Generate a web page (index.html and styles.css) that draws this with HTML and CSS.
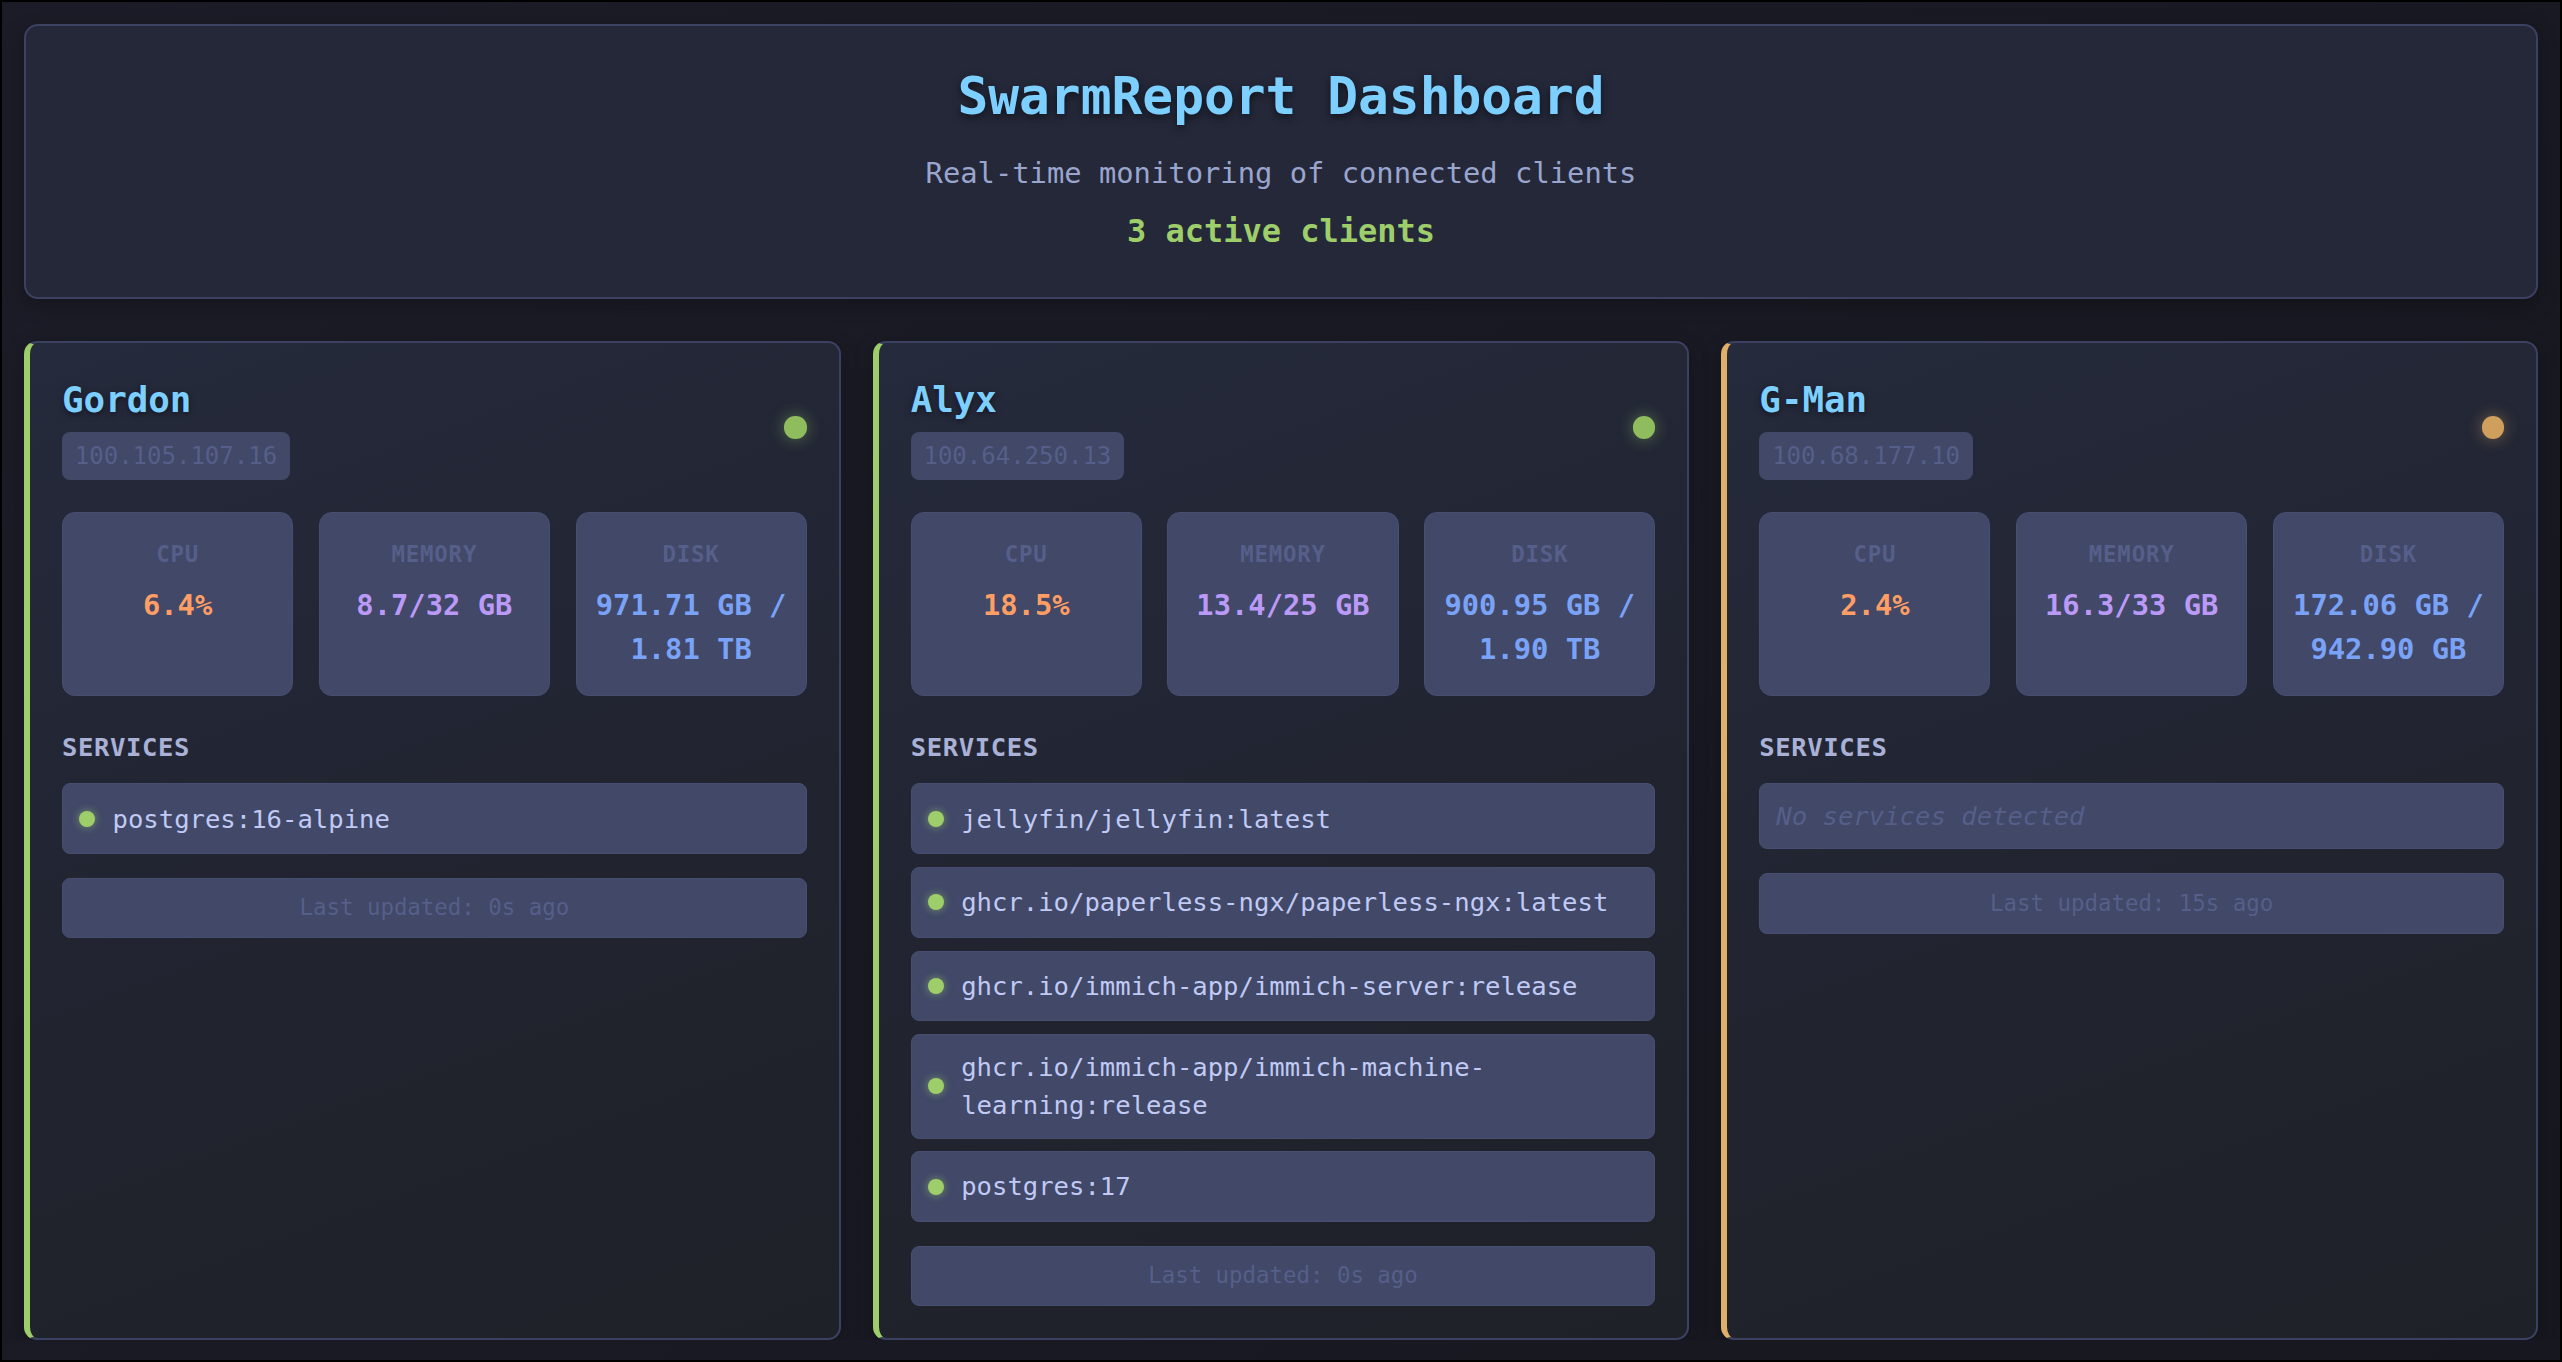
FILE: index.html
```html
<!DOCTYPE html>
<html lang="en">
<head>
<meta charset="utf-8">
<title>SwarmReport Dashboard</title>
<link rel="stylesheet" href="styles.css">
</head>
<body>
<header class="hero">
  <h1 class="hero-title">SwarmReport Dashboard</h1>
  <p class="hero-sub">Real-time monitoring of connected clients</p>
  <p class="hero-count">3 active clients</p>
</header>

<main class="clients">
  <section class="card card-online">
    <div class="card-head">
      <div class="card-id">
        <h2 class="card-name">Gordon</h2>
        <span class="card-ip">100.105.107.16</span>
      </div>
      <span class="status status-online"></span>
    </div>
    <div class="metrics">
      <div class="metric"><div class="metric-label">CPU</div><div class="metric-value v-cpu">6.4%</div></div>
      <div class="metric"><div class="metric-label">MEMORY</div><div class="metric-value v-mem">8.7/32 GB</div></div>
      <div class="metric"><div class="metric-label">DISK</div><div class="metric-value v-disk">971.71 GB / 1.81 TB</div></div>
    </div>
    <div class="services-label">SERVICES</div>
    <ul class="services">
      <li class="service"><span class="svc-dot"></span><span class="svc-name">postgres:16-alpine</span></li>
    </ul>
    <div class="updated">Last updated: 0s ago</div>
  </section>

  <section class="card card-online">
    <div class="card-head">
      <div class="card-id">
        <h2 class="card-name">Alyx</h2>
        <span class="card-ip">100.64.250.13</span>
      </div>
      <span class="status status-online"></span>
    </div>
    <div class="metrics">
      <div class="metric"><div class="metric-label">CPU</div><div class="metric-value v-cpu">18.5%</div></div>
      <div class="metric"><div class="metric-label">MEMORY</div><div class="metric-value v-mem">13.4/25 GB</div></div>
      <div class="metric"><div class="metric-label">DISK</div><div class="metric-value v-disk">900.95 GB / 1.90 TB</div></div>
    </div>
    <div class="services-label">SERVICES</div>
    <ul class="services">
      <li class="service"><span class="svc-dot"></span><span class="svc-name">jellyfin/jellyfin:latest</span></li>
      <li class="service"><span class="svc-dot"></span><span class="svc-name">ghcr.io/paperless-ngx/paperless-ngx:latest</span></li>
      <li class="service"><span class="svc-dot"></span><span class="svc-name">ghcr.io/immich-app/immich-server:release</span></li>
      <li class="service"><span class="svc-dot"></span><span class="svc-name">ghcr.io/immich-app/immich-machine-learning:release</span></li>
      <li class="service"><span class="svc-dot"></span><span class="svc-name">postgres:17</span></li>
    </ul>
    <div class="updated">Last updated: 0s ago</div>
  </section>

  <section class="card card-idle">
    <div class="card-head">
      <div class="card-id">
        <h2 class="card-name">G-Man</h2>
        <span class="card-ip">100.68.177.10</span>
      </div>
      <span class="status status-idle"></span>
    </div>
    <div class="metrics">
      <div class="metric"><div class="metric-label">CPU</div><div class="metric-value v-cpu">2.4%</div></div>
      <div class="metric"><div class="metric-label">MEMORY</div><div class="metric-value v-mem">16.3/33 GB</div></div>
      <div class="metric"><div class="metric-label">DISK</div><div class="metric-value v-disk">172.06 GB / 942.90 GB</div></div>
    </div>
    <div class="services-label">SERVICES</div>
    <div class="no-services">No services detected</div>
    <div class="updated">Last updated: 15s ago</div>
  </section>
</main>
</body>
</html>
```

FILE: styles.css
```css
* { box-sizing: border-box; }

html {
  background: linear-gradient(135deg, #1b1c27 0%, #17171f 100%);
  min-height: 100%;
}

body {
  margin: 0;
  padding: 24px 24px 0;
  font-family: "DejaVu Sans Mono", "Liberation Mono", monospace;
  color: #c0caf5;
}

body::after {
  content: "";
  position: fixed;
  inset: 0;
  border: 2px solid #000;
  pointer-events: none;
}

.hero {
  background: #242839;
  border: 2px solid #3b4261;
  border-radius: 14px;
  padding: 40px 40px 41.5px;
  text-align: center;
  margin-bottom: 42px;
  box-shadow: 0 6px 20px rgba(0, 0, 0, 0.25);
}

.hero-title {
  margin: 0 0 25.6px;
  font-size: 51.2px;
  font-weight: bold;
  line-height: normal;
  color: #7dcfff;
  text-shadow: 0 3px 8px rgba(0, 0, 0, 0.55);
}

.hero-sub {
  margin: 0;
  font-size: 28.8px;
  line-height: 43.2px;
  color: #9aa5ce;
}

.hero-count {
  margin: 12.5px 0 0;
  font-size: 32px;
  line-height: 48px;
  font-weight: bold;
  color: #9ece6a;
}

.clients {
  display: grid;
  grid-template-columns: repeat(3, 1fr);
  gap: 32px;
}

.card {
  background: linear-gradient(160deg, #252a3c 0%, #21232f 55%, #1f2128 100%);
  border: 2px solid #3b4261;
  border-left-width: 6px;
  border-radius: 13px;
  padding: 32px;
  box-shadow: 0 6px 20px rgba(0, 0, 0, 0.25);
}

.card-online { border-left-color: #9ece6a; }
.card-idle { border-left-color: #e0af68; }

.card-head {
  display: flex;
  justify-content: space-between;
  align-items: center;
  margin-bottom: 32px;
}

.card-id {
  display: flex;
  flex-direction: column;
  align-items: flex-start;
}

.card-name {
  margin: 0 0 7.6px;
  font-size: 35.84px;
  line-height: 50px;
  font-weight: bold;
  color: #7dcfff;
  text-shadow: 0 2px 6px rgba(0, 0, 0, 0.5);
}

.card-ip {
  display: inline-block;
  background: #414868;
  color: #565f89;
  font-size: 24px;
  line-height: 28px;
  padding: 10px 12.8px;
  border-radius: 8px;
}

.status {
  width: 22.4px;
  height: 22.4px;
  border-radius: 50%;
  flex: none;
}

.status-online {
  background: #8fbd5e;
  box-shadow: 0 0 16px rgba(158, 206, 106, 0.45);
}

.status-idle {
  background: #cf9f5e;
  box-shadow: 0 0 16px rgba(224, 175, 104, 0.45);
}

.metrics {
  display: grid;
  grid-template-columns: repeat(3, 1fr);
  gap: 25.6px;
  margin-bottom: 32px;
}

.metric {
  background: #414868;
  border: 1px solid #474e70;
  border-radius: 12.8px;
  padding: 24.6px 8px;
  text-align: center;
}

.metric-label {
  font-size: 22.4px;
  line-height: 33.6px;
  font-weight: bold;
  color: #565f89;
  letter-spacing: 0.8px;
  margin-bottom: 12.8px;
}

.metric-value {
  font-size: 28.8px;
  line-height: 43.2px;
  font-weight: bold;
}

.v-cpu { color: #ff9e64; }
.v-mem { color: #bb9af7; }
.v-disk { color: #7aa2f7; }

.services-label {
  padding-top: 3px;
  font-size: 25.6px;
  line-height: 33.3px;
  font-weight: bold;
  color: #a9b1d6;
  letter-spacing: 0.6px;
  margin-bottom: 18.7px;
}

.services {
  list-style: none;
  margin: 0;
  padding: 0;
  display: flex;
  flex-direction: column;
  gap: 12.8px;
}

.service {
  display: flex;
  align-items: center;
  background: #414868;
  border: 1px solid #474e70;
  border-radius: 8px;
  padding: 12.8px 16px;
  font-size: 25.6px;
  line-height: 38.4px;
  color: #c0caf5;
}

.svc-dot {
  flex: none;
  width: 16px;
  height: 16px;
  margin: 13.6px 17.5px 13.6px 0;
  border-radius: 50%;
  background: #9ece6a;
  box-shadow: 0 0 8px rgba(158, 206, 106, 0.6);
}

.svc-name {
  min-width: 0;
  overflow-wrap: anywhere;
}

.no-services {
  background: #414868;
  border: 1px solid #474e70;
  border-radius: 8px;
  padding: 12.8px 16px;
  font-size: 25.6px;
  line-height: 38.4px;
  font-style: italic;
  color: #565f89;
}

.updated {
  margin-top: 24px;
  background: #414868;
  border: 1px solid #474e70;
  border-radius: 8px;
  padding: 12.3px 16px;
  text-align: center;
  font-size: 22.4px;
  line-height: 33.6px;
  color: #565f89;
}
```
